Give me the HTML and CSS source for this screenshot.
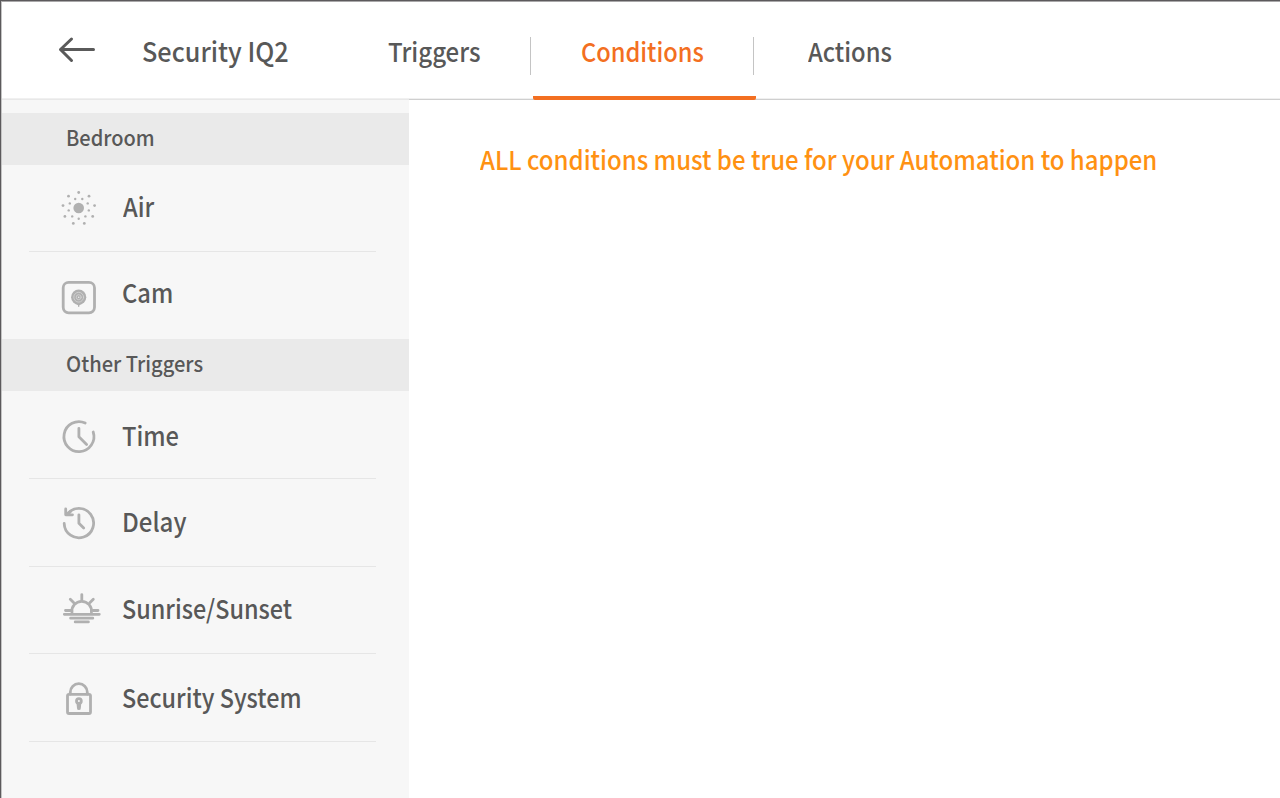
FILE: index.html
```html
<!DOCTYPE html>
<html lang="en">
<head>
<meta charset="utf-8">
<title>Security IQ2</title>
<link rel="stylesheet" href="styles.css">
</head>
<body>
<div class="app">
  <header class="topbar">
    <svg class="back" width="38" height="28" viewBox="58 36 38 28"><path d="M93.500 49.500H60.500M71.500 39L60.500 49.500L71.500 60.500"/></svg>
    <h1 class="title"><span>Security IQ2</span></h1>
    <nav class="tabs">
      <a class="tab tab-triggers"><span>Triggers</span></a>
      <a class="tab tab-conditions"><span>Conditions</span></a>
      <a class="tab tab-actions"><span>Actions</span></a>
    </nav>
  </header>
  <div class="body">
    <aside class="sidebar">
      <h2 class="section"><span>Bedroom</span></h2>
      <ul class="list">
        <li class="row row-air">
          <svg class="icon" width="44" height="44" viewBox="57 186 44 44">
            <circle class="fill" cx="78.700" cy="208" r="5.300"/>
            <g class="fill"><circle cx="78.700" cy="192.500" r="1.400"/><circle cx="68.500" cy="196.200" r="1.400"/><circle cx="89" cy="196.200" r="1.400"/><circle cx="75.200" cy="199" r="1.200"/><circle cx="82.300" cy="199" r="1.200"/><circle cx="69.800" cy="203.400" r="1.200"/><circle cx="87.700" cy="203.400" r="1.200"/><circle cx="63" cy="205.600" r="1.400"/><circle cx="94.600" cy="205.600" r="1.400"/><circle cx="68.700" cy="210.400" r="1.200"/><circle cx="88.800" cy="210.400" r="1.200"/><circle cx="64.900" cy="216.400" r="1.400"/><circle cx="92.700" cy="216.400" r="1.400"/><circle cx="72.200" cy="216.400" r="1.200"/><circle cx="85.400" cy="216.400" r="1.200"/><circle cx="78.700" cy="218.800" r="1.200"/><circle cx="73.300" cy="223.400" r="1.400"/><circle cx="84.300" cy="223.400" r="1.400"/></g>
          </svg>
          <span class="label">Air</span>
        </li>
        <li class="row row-cam">
          <svg class="icon" width="44" height="44" viewBox="57 276 44 44">
            <rect x="63.200" y="282.300" width="31.300" height="30.500" rx="5.500"/>
            <circle class="fill" cx="78.700" cy="297.200" r="7.600"/>
            <circle class="ring" cx="78.700" cy="297.200" r="4.900"/><circle class="ring" cx="78.700" cy="297.200" r="2.500"/><circle class="dot" cx="78.700" cy="297.200" r=".8"/>
            <path class="fill" d="M75.500 303.500L78 305.300V306.500A.8 .8 0 0 0 79.400 306.500V305.300L81.900 303.500Z"/>
          </svg>
          <span class="label">Cam</span>
        </li>
      </ul>
      <h2 class="section section-other"><span>Other Triggers</span></h2>
      <ul class="list">
        <li class="row row-time">
          <svg class="icon" width="44" height="44" viewBox="57 415 44 44">
            <path d="M85.200 423A15 15 0 1 0 93.200 432"/><path d="M78.900 428.300V436.800L86.600 444.500"/>
          </svg>
          <span class="label">Time</span>
        </li>
        <li class="row row-delay">
          <svg class="icon" width="44" height="44" viewBox="57 501 44 44">
            <path d="M64.200 523.500A14.700 14.700 0 1 0 67 514.500"/><path d="M65.700 509V514.800H72.500M66 514.700L70.500 511.500"/><path d="M78.900 514.800V523.200L83.700 528"/>
          </svg>
          <span class="label">Delay</span>
        </li>
        <li class="row row-sun">
          <svg class="icon" width="44" height="44" viewBox="57 587 44 44">
            <path d="M72 612.500A9.800 9.800 0 1 1 91.400 612.500"/><path d="M81.800 594.600V600.300M70.300 599.300L73.800 602.800M93.300 599.300L89.800 602.800M65.500 610.500H70.500M93 610.500H98M64.300 614.300H99.300M70.600 618.200H92.800M75.200 621.900H88.400"/>
          </svg>
          <span class="label">Sunrise/Sunset</span>
        </li>
        <li class="row row-lock">
          <svg class="icon" width="44" height="44" viewBox="57 677 44 44">
            <rect x="67.500" y="694.300" width="23" height="19.200" rx="1.500"/><path d="M70.300 694V692.200A8.500 8.500 0 0 1 87.300 692.200V694"/><circle cx="78.900" cy="701" r="2.400"/><path class="fill" d="M76.500 703H81.300L80.800 708.200A1.900 1.900 0 0 1 77 708.200Z"/>
          </svg>
          <span class="label">Security System</span>
        </li>
      </ul>
    </aside>
    <main class="content"><p class="notice"><span>ALL conditions must be true for your Automation to happen</span></p></main>
  </div>
</div>
</body>
</html>
```
FILE: styles.css
```css
* { box-sizing: border-box; }
body { margin: 0; background: #fff; color: #585858; font: 500 26px/36px "Noto Sans CJK SC", "Noto Sans", sans-serif; border-top: 1px solid #5c5a5c; border-left: 1px solid #5c5a5c; overflow: hidden; }
h1, h2, p, ul { margin: 0; padding: 0; font-weight: 500; font-size: inherit; list-style: none; }
span { display: block; white-space: nowrap; transform-origin: 0 50%; transform: scaleX(.91); }
svg { display: block; flex: none; fill: none; stroke: #b0b0b0; stroke-width: 2.8; stroke-linecap: round; stroke-linejoin: round; }
.app { display: flex; flex-direction: column; height: 797px; border-top: 1px solid #a9a8a9; border-left: 1px solid #c4c4c4; }
.topbar { display: flex; height: 98px; flex: none; border-bottom: 1px solid #cfcfcf; box-shadow: inset 0 -1px #f0f0f0; }
.back { margin: 34px 0 0 56px; stroke: #5a5a5a; stroke-width: 3; }
.title { width: 246px; padding-top: 30.5px; margin-left: 46px; font-size: 27px; }
.title span { transform: scaleX(.936); }
.tabs { display: flex; }
.tab { display: flex; justify-content: space-between; height: 98px; padding-top: 31px; }
.tab-triggers { width: 145px; }
.tab-triggers span { transform: scaleX(.925); }
.tab-conditions { width: 223px; padding-left: 48px; color: #f36f21; border-bottom: 4px solid #f36f21; border-radius: 2px; }
.tab-conditions span { transform: scaleX(.907); }
.tab-triggers::after, .tab-conditions::after { content: ""; width: 1px; height: 38px; margin: 4px 2px 0 0; background: #c4c4c4; }
.tab-actions { padding-left: 52px; }
.tab-actions span { transform: scaleX(.914); }
.body { display: flex; flex: 1; min-height: 0; }
.sidebar { width: 407px; flex: none; padding-top: 13px; margin-top: -1px; background: #f7f7f7; border-top: 1px solid #e8e8e8; }
.section { height: 52px; padding: 6px 0 0 64px; background: #eaeaea; font-size: 21px; }
.section span { transform: scaleX(.952); }
.section-other span { transform: scaleX(.958); }
.row { display: flex; height: 88px; margin: 0 33px 0 27px; padding-left: 28px; border-bottom: 1px solid #e6e6e6; }
.icon { margin-top: 21px; }
.label { margin: 24px 0 0 21px; }
.row-air { height: 87px; }
.row-air .label { margin-top: 23px; margin-left: 21.5px; }
.row-cam { height: 87px; border-bottom-color: transparent; }
.row-cam .icon { margin-top: 24px; }
.row-cam .label { margin-top: 22px; }
.row-time .icon { margin-top: 24px; }
.row-time .label { margin-top: 26px; }
.row-delay .icon { margin-top: 22px; }
.row-delay .label { transform: scaleX(.925); }
.row-sun { height: 87px; }
.row-sun .icon { margin-top: 20px; }
.row-sun .label { margin-top: 23px; transform: scaleX(.9); }
.row-lock .icon { margin-top: 23px; }
.row-lock .label { margin-top: 25px; transform: scaleX(.9); }
.content { flex: 1; padding: 41px 0 0 70.5px; }
.notice { color: #ff9112; }
.notice span { transform: scaleX(.922); }
.fill { fill: #b0b0b0; stroke: none; }
.ring { stroke: #d5d5d5; stroke-width: .8; }
.dot { fill: #eee; stroke: none; }
```
